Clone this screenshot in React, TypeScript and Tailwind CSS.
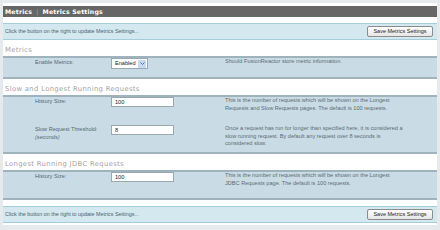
import React from "react";

const body = "font-['Liberation_Sans',Arial,sans-serif]";
const verdana = "font-['DejaVu_Sans',Verdana,sans-serif]";

function InfoBar() {
  return (
    <div className="flex h-[17px] items-center justify-between border-y border-[#a6cddb] bg-[#d3e8ef] pl-[2px] pr-[4px]">
      <span className={`${body} text-[5.4px] text-[#4a6470]`}>
        Click the button on the right to update Metrics Settings...
      </span>
      <button
        className={`${body} flex h-[11px] w-[66px] items-center justify-center rounded-[2px] border border-[#8c8c8c] bg-gradient-to-b from-white to-[#e6e6e6] text-[5.5px] text-[#222]`}
      >
        Save Metrics Settings
      </button>
    </div>
  );
}

function SectionTitle({ children }: { children: React.ReactNode }) {
  return (
    <div
      className={`${verdana} flex h-[16px] items-end pb-[1px] pl-[2px] text-[6.8px] tracking-[0.35px] text-[#a3a3a3]`}
    >
      {children}
    </div>
  );
}

function TextInput({ value }: { value: string }) {
  return (
    <div
      className={`${body} flex h-[10px] w-[63px] items-center border border-[#9aa9b1] bg-white pl-[3px] text-[5.6px] text-[#222]`}
    >
      {value}
    </div>
  );
}

function Row({
  label,
  sub,
  control,
  desc,
  className = "",
}: {
  label: string;
  sub?: string;
  control: React.ReactNode;
  desc: React.ReactNode;
  className?: string;
}) {
  return (
    <div className={`flex items-start ${className}`}>
      <div className={`${body} w-[108px] pl-[32px] text-[5.6px] leading-[8px] text-[#556770]`}>
        <div>{label}</div>
        {sub && <div className="italic">{sub}</div>}
      </div>
      <div className="w-[114px]">{control}</div>
      <div className={`${body} w-[195px] text-[5.6px] leading-[7.5px] text-[#5d6b72]`}>{desc}</div>
    </div>
  );
}

function Rows({ children }: { children: React.ReactNode }) {
  return (
    <div className="border-y-2 border-[#9fb3bd] bg-[#c9dce6]">{children}</div>
  );
}

export default function App() {
  return (
    <div className="h-[230px] w-[440px] overflow-hidden bg-[#e6eaed] px-[3px] pt-[3px]">
      <div className="h-[222px] bg-white pt-[3px]">
        <div className={`${verdana} flex h-[11px] items-center bg-[#666666] pl-[2px] text-[6.2px] font-bold tracking-[0.2px] text-white`}>
          Metrics <span className="mx-[4px] font-normal text-[#aaa]">|</span> Metrics Settings
        </div>
        <div className="h-[6px]" />
        <InfoBar />

        <SectionTitle>Metrics</SectionTitle>
        <Rows>
          <Row
            className="h-[19px] items-center"
            label="Enable Metrics:"
            control={
              <div className={`${body} flex h-[11px] w-[37px] items-center justify-between border border-[#9aa9b1] bg-white pl-[3px] text-[5.6px] text-[#222]`}>
                Enabled
                <span className="mr-[1px] flex h-[8px] w-[8px] items-center justify-center rounded-[1px] bg-[#c7d9f2]">
                  <svg width="5" height="3" viewBox="0 0 5 3">
                    <path d="M0.5 0.5 L2.5 2.5 L4.5 0.5" stroke="#4d6fae" strokeWidth="1" fill="none" />
                  </svg>
                </span>
              </div>
            }
            desc="Should FusionReactor store metric information."
          />
        </Rows>

        <SectionTitle>Slow and Longest Running Requests</SectionTitle>
        <Rows>
          <Row
            className="h-[23px] items-center"
            label="History Size:"
            control={<TextInput value="100" />}
            desc={
              <>
                This is the number of requests which will be shown on the Longest
                <br />
                Requests and Slow Requests pages. The default is 100 requests.
              </>
            }
          />
          <Row
            className="h-[32px] pt-[5px]"
            label="Slow Request Threshold:"
            sub="(seconds)"
            control={<TextInput value="8" />}
            desc={
              <>
                Once a request has run for longer than specified here, it is considered a
                <br />
                slow running request. By default any request over 8 seconds is
                <br />
                considered slow.
              </>
            }
          />
        </Rows>

        <SectionTitle>Longest Running JDBC Requests</SectionTitle>
        <Rows>
          <Row
            className="h-[26px] items-center"
            label="History Size:"
            control={<TextInput value="100" />}
            desc={
              <>
                This is the number of requests which will be shown on the Longest
                <br />
                JDBC Requests page. The default is 100 requests.
              </>
            }
          />
        </Rows>
        <div className="h-[6px]" />
        <InfoBar />
      </div>
    </div>
  );
}
